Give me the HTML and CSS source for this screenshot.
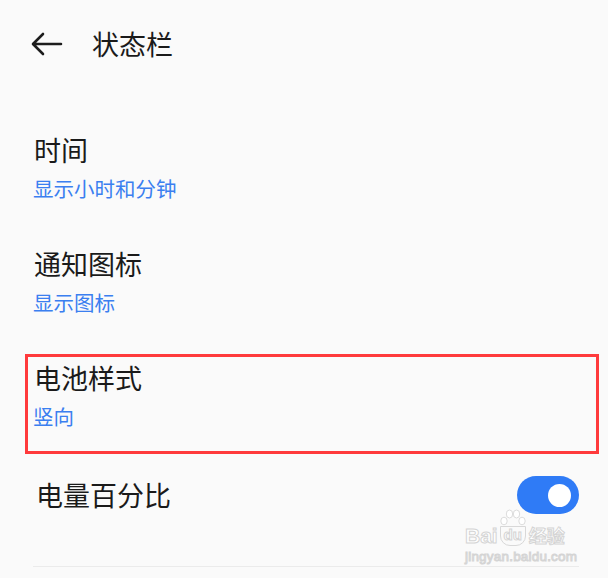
FILE: index.html
```html
<!DOCTYPE html>
<html lang="zh-CN">

<head>
    <meta charset="UTF-8">
    <meta name="viewport" content="width=device-width, initial-scale=1.0">
    <title>状态栏</title>
    <link rel="stylesheet" href="styles.css">
</head>

<body>
    <div class="page">
        <header class="top-bar">
            <svg class="back-icon" width="32" height="24" viewBox="0 0 32 24">
                <path d="M30 12 H3 M12 2 L2 12 L12 22" fill="none" stroke="#1c1c1c" stroke-width="2.6" stroke-linecap="round" stroke-linejoin="round" />
            </svg>
            <h1 class="page-title">状态栏</h1>
        </header>

        <div class="settings-list">
            <div class="setting-item">
                <div class="setting-title">时间</div>
                <div class="setting-value">显示小时和分钟</div>
            </div>

            <div class="setting-item">
                <div class="setting-title">通知图标</div>
                <div class="setting-value">显示图标</div>
            </div>

            <div class="setting-item highlighted">
                <div class="setting-title">电池样式</div>
                <div class="setting-value">竖向</div>
                <div class="highlight-box"></div>
            </div>

            <div class="setting-item switch-item">
                <div class="setting-title">电量百分比</div>
                <div class="toggle on">
                    <div class="toggle-knob"></div>
                </div>
            </div>
        </div>

        <div class="watermark">
            <div class="wm-logo">
                <span class="wm-bai">Bai</span>
                <span class="wm-du">
                    <svg class="wm-paw" width="28" height="20" viewBox="0 0 28 20">
                        <g fill="#fff" stroke="#dcdcdc" stroke-width="1">
                            <ellipse cx="5" cy="12" rx="3.2" ry="3.8" />
                            <ellipse cx="10.5" cy="5" rx="3.2" ry="4" />
                            <ellipse cx="17.5" cy="5" rx="3.2" ry="4" />
                            <ellipse cx="23" cy="12" rx="3.2" ry="3.8" />
                        </g>
                    </svg>
                    <span class="wm-du-text">du</span>
                </span>
                <span class="wm-cn">经验</span>
            </div>
            <div class="wm-url">jingyan.baidu.com</div>
        </div>
    </div>
</body>

</html>
```

FILE: styles.css
```css
* {
    margin: 0;
    padding: 0;
    box-sizing: border-box;
}

body {
    background-color: #fafafa;
    font-family: "Noto Sans CJK SC", "Noto Sans", sans-serif;
    color: #1a1a1a;
}

.page {
    position: relative;
    width: 608px;
    height: 578px;
    overflow: hidden;
}

.top-bar {
    display: flex;
    align-items: center;
    height: 88px;
    padding-left: 31px;
}

.back-icon {
    display: block;
}

.page-title {
    margin-left: 29px;
    font-size: 27px;
    font-weight: normal;
    line-height: 36px;
}

.settings-list {
    padding: 22px 29px 0 33px;
}

.setting-item {
    position: relative;
    padding: 22px 0;
}

.setting-title {
    font-size: 27px;
    line-height: 36px;
    padding-left: 1px;
}

.setting-value {
    margin-top: 6px;
    font-size: 20.5px;
    line-height: 28px;
    color: #3b7ff0;
}

/* red frame drawn around the battery style row */
.highlight-box {
    position: absolute;
    left: -8px;
    right: -20px;
    top: 16px;
    height: 100px;
    border: 3px solid #ff3a3c;
}

.switch-item {
    display: flex;
    justify-content: space-between;
    align-items: center;
    padding: 24px 0 52px;
    border-bottom: 1px solid #ebebeb;
}

.switch-item .setting-title {
    padding-left: 3px;
}

.toggle {
    display: flex;
    align-items: center;
    justify-content: flex-end;
    width: 62px;
    height: 38px;
    padding-right: 8px;
    border-radius: 19px;
    background-color: #d0d0d0;
}

.toggle.on {
    background-color: #2f7bf6;
}

.toggle-knob {
    width: 23px;
    height: 23px;
    border-radius: 50%;
    background-color: #fff;
}

.watermark {
    position: absolute;
    left: 465px;
    top: 510px;
    font-family: "Liberation Sans", Arial, sans-serif;
    color: #fff;
    -webkit-text-stroke: 1px #d4d4d4;
}

.wm-logo {
    display: flex;
    align-items: flex-end;
    height: 36px;
}

.wm-bai {
    font-size: 21px;
    font-weight: bold;
    line-height: 20px;
}

.wm-du {
    position: relative;
    display: flex;
    flex-direction: column;
    align-items: center;
    margin-left: 1px;
}

.wm-paw {
    display: block;
    margin-bottom: -3px;
}

.wm-du-text {
    font-size: 15px;
    font-weight: bold;
    line-height: 16px;
    padding: 0 3px 2px;
    border: 1px solid #d8d8d8;
    border-radius: 0 0 10px 10px;
}

.wm-cn {
    margin-left: 2px;
    font-family: "Noto Sans CJK SC", sans-serif;
    font-size: 18px;
    font-weight: bold;
    line-height: 22px;
}

.wm-url {
    margin-top: 4px;
    font-size: 13.5px;
    line-height: 14px;
    letter-spacing: 0.2px;
}
```
